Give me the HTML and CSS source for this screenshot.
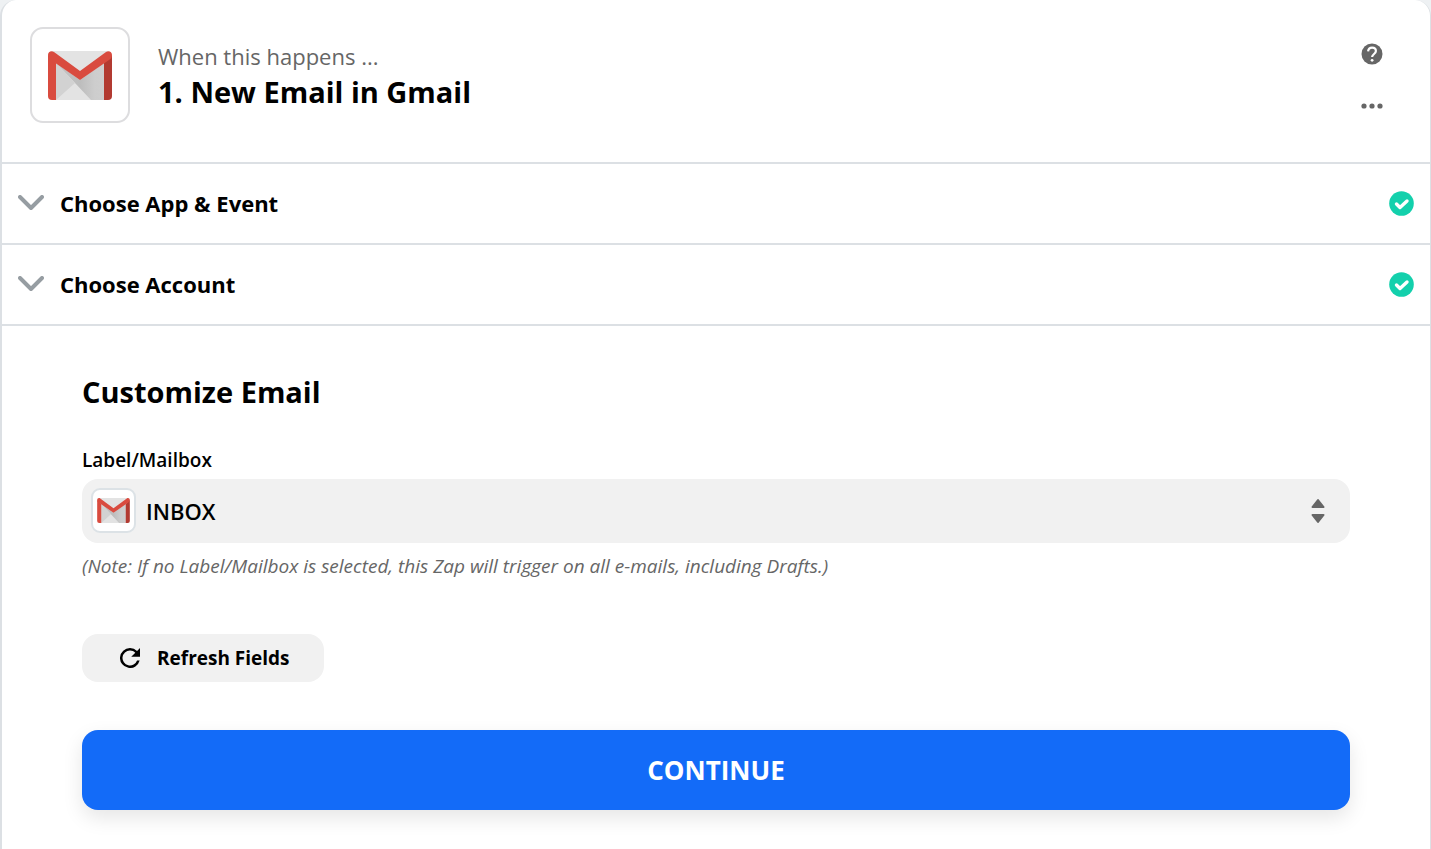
FILE: index.html
```html
<!DOCTYPE html>
<html lang="en">
<head>
<meta charset="utf-8">
<meta name="viewport" content="width=device-width, initial-scale=1">
<title>New Email in Gmail</title>
<link rel="stylesheet" href="styles.css">
</head>
<body>
<svg class="defs" aria-hidden="true">
  <defs>
    <linearGradient id="fold" x1="0" y1="0" x2="1" y2="0">
      <stop offset="0" stop-color="#c4c4c4"/>
      <stop offset="0.500" stop-color="#bdbdbd"/>
      <stop offset="0.800" stop-color="#cdcdcd"/>
      <stop offset="1" stop-color="#cfcfcf"/>
    </linearGradient>
    <symbol id="gmail" viewBox="0 0 64 49">
      <path fill="#e3e3e3" d="M4 0h56v49H4z"/>
      <path fill="url(#fold)" d="M8 12l24 17 24-17v37H43L27 32z"/>
      <path fill="#d2d2d2" d="M8 12l19 20L8 49z"/>
      <path fill="#d94b3f" d="M0 4v41a4 4 0 0 0 4 4h4V12z"/>
      <path fill="#b23a31" d="M64 4v41a4 4 0 0 1-4 4h-4V12z"/>
      <path fill="#d94b3f" d="M0 4C0 1 3-1 6 1l26 19L58 1c3-2 6 0 6 3 0 2-1 4-3 5L32 29 3 9C1 8 0 6 0 4z"/>
    </symbol>
    <symbol id="chevron" viewBox="0 0 26 16">
      <path d="M2 2l11 11L24 2" fill="none" stroke="#969da2" stroke-width="4" stroke-linecap="round" stroke-linejoin="round"/>
    </symbol>
    <symbol id="check" viewBox="0 0 25 25">
      <circle cx="12.500" cy="12.500" r="12.300" fill="#13d0ac"/>
      <path d="M7.500 13l3.500 3.500 7-6.500" fill="none" stroke="#fff" stroke-width="3.400" stroke-linecap="round" stroke-linejoin="round"/>
    </symbol>
  </defs>
</svg>
<main class="card">
  <header class="step-header">
    <div class="app-icon"><svg class="app-logo" role="img" aria-label="Gmail"><use href="#gmail"/></svg></div>
    <div class="titles">
      <p class="eyebrow">When this happens ...</p>
      <h1 class="title">1. New Email in Gmail</h1>
    </div>
    <div class="actions">
      <button class="icon-button" type="button" aria-label="Help">
        <svg width="22" height="22" viewBox="0 0 22 22">
          <circle cx="11" cy="11" r="10.500" fill="#666"/>
          <path d="M7.100 8.300C7.300 5.900 8.900 4.600 11.100 4.600c2.200 0 3.800 1.400 3.800 3.400 0 2.900-3.800 3.100-3.800 6.100" fill="none" stroke="#fff" stroke-width="2.200"/>
          <circle cx="11.100" cy="17.300" r="1.400" fill="#fff"/>
        </svg>
      </button>
      <button class="icon-button" type="button" aria-label="More options">
        <svg width="22" height="22" viewBox="0 0 22 22" fill="#666">
          <circle cx="3" cy="11" r="2.600"/><circle cx="11" cy="11" r="2.600"/><circle cx="19" cy="11" r="2.600"/>
        </svg>
      </button>
    </div>
  </header>
  <button class="section-toggle" type="button">
    <svg class="chevron" aria-hidden="true"><use href="#chevron"/></svg>
    <span class="section-name">Choose App &amp; Event</span>
    <svg class="check" role="img" aria-label="Complete"><use href="#check"/></svg>
  </button>
  <button class="section-toggle" type="button">
    <svg class="chevron" aria-hidden="true"><use href="#chevron"/></svg>
    <span class="section-name">Choose Account</span>
    <svg class="check" role="img" aria-label="Complete"><use href="#check"/></svg>
  </button>
  <form class="customize">
    <h2 class="heading">Customize Email</h2>
    <label class="field-label" for="mailbox">Label/Mailbox</label>
    <div class="select-wrap">
      <select class="select" id="mailbox" aria-describedby="mailbox-note"><option>INBOX</option></select>
      <span class="select-icon"><svg class="select-logo" aria-hidden="true"><use href="#gmail"/></svg></span>
      <svg class="select-arrows" viewBox="0 0 14 26" fill="#666" stroke="#666" stroke-width="2" stroke-linejoin="round" aria-hidden="true">
        <path d="M7 2l5.500 7h-11zM7 24l5.500-7h-11z"/>
      </svg>
    </div>
    <p class="note" id="mailbox-note">(Note: If no Label/Mailbox is selected, this Zap will trigger on all e-mails, including Drafts.)</p>
    <button class="refresh" type="button">
      <svg width="20" height="20" viewBox="4 4 16 16" aria-hidden="true"><path d="M17.650 6.350A7.958 7.958 0 0 0 12 4a8 8 0 1 0 7.730 10h-2.080A6 6 0 1 1 12 6c1.660 0 3.140.69 4.220 1.780L13 11h7V4z"/></svg>
      Refresh Fields
    </button>
    <button class="continue" type="submit">CONTINUE</button>
  </form>
</main>
</body>
</html>
```
FILE: styles.css
```css
* {
  box-sizing: border-box;
}

body {
  margin: 0;
  background: #eef1f3;
  color: #000;
  font-family: "Open Sans", "Noto Sans", sans-serif;
}

h1, h2, p {
  margin: 0;
}

button {
  border: 0;
  background: none;
  color: inherit;
  font-family: inherit;
  cursor: pointer;
}

svg {
  display: block;
  flex: none;
}

.defs {
  position: absolute;
  width: 0;
  height: 0;
}

.card {
  min-height: 100vh;
  border: solid #dce0e4;
  border-width: 0 1px 0 2px;
  border-radius: 16px 16px 0 0;
  background: #fff;
}

.step-header {
  display: flex;
  align-items: flex-start;
  gap: 28px;
  padding: 27px 47px 39px 28px;
  border-bottom: 2px solid #dce0e4;
}

.app-icon {
  display: grid;
  place-items: center;
  width: 100px;
  height: 96px;
  border: 2px solid #dddddf;
  border-radius: 13px;
}

.app-logo {
  width: 64px;
  height: 49px;
}

.titles {
  flex: 1;
  padding-top: 11px;
}

.eyebrow {
  color: #666;
  font-size: 22px;
  line-height: 36px;
}

.title {
  font-size: 29px;
  font-weight: 700;
  line-height: 36px;
}

.actions {
  display: grid;
  gap: 30px;
  padding-top: 16px;
}

.icon-button {
  padding: 0;
}

.section-toggle {
  display: flex;
  align-items: center;
  gap: 16px;
  width: 100%;
  padding: 23px 16px 24px;
  border-bottom: 2px solid #dce0e4;
  text-align: left;
}

.chevron {
  width: 26px;
  height: 16px;
}

.check {
  width: 25px;
  height: 25px;
}

.section-name {
  flex: 1;
  font-size: 22px;
  font-weight: 700;
  line-height: 32px;
}

.customize {
  display: flex;
  flex-direction: column;
  align-items: flex-start;
  padding: 46px 80px 40px;
}

.heading {
  font-size: 29px;
  line-height: 40px;
}

.field-label {
  margin-top: 32px;
  font-size: 19px;
  font-weight: 600;
  line-height: 32px;
}

.select-wrap {
  position: relative;
  width: 100%;
  margin-top: 3px;
}

.select {
  display: block;
  width: 100%;
  height: 64px;
  padding: 0 64px;
  border: 0;
  border-radius: 16px;
  appearance: none;
  background: #f1f1f1;
  color: #000;
  font-family: inherit;
  font-size: 22px;
  font-weight: 600;
}

.select-icon {
  position: absolute;
  top: 9px;
  left: 9px;
  display: grid;
  place-items: center;
  width: 45px;
  height: 45px;
  border: 2px solid #dce2e6;
  border-radius: 9px;
  background: #fff;
  pointer-events: none;
}

.select-logo {
  width: 33px;
  height: 25px;
}

.select-arrows {
  position: absolute;
  top: 19px;
  right: 25px;
  width: 14px;
  height: 26px;
  pointer-events: none;
}

.note {
  margin-top: 7px;
  color: #666;
  font-size: 19px;
  font-style: italic;
  line-height: 32px;
}

.refresh {
  display: flex;
  align-items: center;
  gap: 17px;
  height: 48px;
  margin-top: 52px;
  padding: 0 34px 0 38px;
  border-radius: 16px;
  background: #f1f1f1;
  font-size: 19px;
  font-weight: 700;
}

.continue {
  width: 100%;
  height: 80px;
  margin-top: 48px;
  border-radius: 16px;
  background: #136bf8;
  box-shadow: 0 8px 20px rgba(0, 0, 0, 0.1);
  color: #fff;
  font-size: 26px;
  font-weight: 700;
}
```
